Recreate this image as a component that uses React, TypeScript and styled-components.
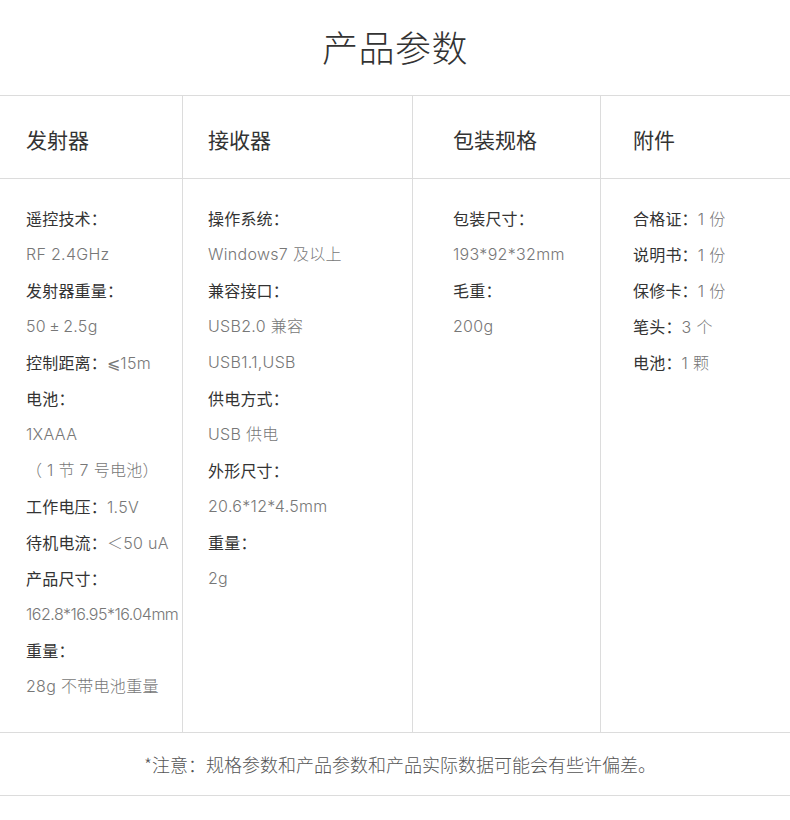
import React from "react";
import { createGlobalStyle, styled } from "styled-components";

const GlobalStyle = createGlobalStyle`
    html, body {
        margin: 0;
        padding: 0;
        background: #fff;
    }

    body {
        font-family: "Noto Sans CJK SC", "Noto Sans", sans-serif;
        color: #333;
    }
`;

const Page = styled.div`
    width: 790px;
`;

const Title = styled.h1`
    margin: 0;
    height: 95px;
    padding-bottom: 4px;
    box-sizing: border-box;
    display: flex;
    align-items: center;
    justify-content: center;
    font-size: 36px;
    font-weight: 300;
    color: #333;
    letter-spacing: 0.5px;
`;

const Grid = styled.div`
    display: grid;
    grid-template-columns: 183px 230px 188px 189px;
    border-top: 1px solid #dcdcdc;
`;

const Cell = styled.div<{ $pad: number; $last?: boolean }>`
    padding-left: ${(p) => p.$pad}px;
    border-right: ${(p) => (p.$last ? "none" : "1px solid #dcdcdc")};
    border-bottom: 1px solid #dcdcdc;
`;

const HeadCell = styled(Cell)`
    height: 83px;
    display: flex;
    align-items: center;
    padding-top: 3px;
    box-sizing: border-box;
    font-size: 21px;
    color: #333;
`;

const BodyCell = styled(Cell)`
    height: 554px;
    box-sizing: border-box;
    padding-top: 21px;
    display: flex;
    flex-direction: column;
`;

const Line = styled.div<{ $tight?: boolean }>`
    height: 36px;
    line-height: 36px;
    font-size: 16px;
    white-space: nowrap;
    color: #777;
    font-family: "Inter", "Noto Sans CJK SC", sans-serif;
    font-weight: 300;
    letter-spacing: ${(p) => (p.$tight ? "-0.5px" : "0.3px")};
`;

const Label = styled.span`
    color: #333;
    font-family: "Noto Sans CJK SC", sans-serif;
    font-weight: 400;
    letter-spacing: 0.2px;
`;

const Note = styled.div`
    height: 62px;
    padding-left: 10px;
    border-bottom: 1px solid #dcdcdc;
    display: flex;
    align-items: center;
    justify-content: center;
    font-size: 18px;
    font-weight: 300;
    color: #555;
`;

type Item = { label?: string; value?: string; tight?: boolean };

const columns: { title: string; pad: number; items: Item[] }[] = [
    {
        title: "发射器",
        pad: 26,
        items: [
            { label: "遥控技术：" },
            { value: "RF 2.4GHz" },
            { label: "发射器重量：" },
            { value: "50\u2009±\u20092.5g" },
            { label: "控制距离：", value: "⩽15m" },
            { label: "电池：" },
            { value: "1XAAA" },
            { value: "（ 1 节 7 号电池）" },
            { label: "工作电压：", value: "1.5V" },
            { label: "待机电流：", value: "＜50 uA" },
            { label: "产品尺寸：" },
            { value: "162.8*16.95*16.04mm", tight: true },
            { label: "重量：" },
            { value: "28g 不带电池重量" },
        ],
    },
    {
        title: "接收器",
        pad: 25,
        items: [
            { label: "操作系统：" },
            { value: "Windows7 及以上" },
            { label: "兼容接口：" },
            { value: "USB2.0 兼容" },
            { value: "USB1.1,USB" },
            { label: "供电方式：" },
            { value: "USB 供电" },
            { label: "外形尺寸：" },
            { value: "20.6*12*4.5mm" },
            { label: "重量：" },
            { value: "2g" },
        ],
    },
    {
        title: "包装规格",
        pad: 40,
        items: [
            { label: "包装尺寸：" },
            { value: "193*92*32mm" },
            { label: "毛重：" },
            { value: "200g" },
        ],
    },
    {
        title: "附件",
        pad: 32,
        items: [
            { label: "合格证：", value: "1 份" },
            { label: "说明书：", value: "1 份" },
            { label: "保修卡：", value: "1 份" },
            { label: "笔头：", value: "3 个" },
            { label: "电池：", value: "1 颗" },
        ],
    },
];

export default function App() {
    return (
        <Page>
            <GlobalStyle />
            <Title>产品参数</Title>
            <Grid>
                {columns.map((col, i) => (
                    <HeadCell key={col.title} $pad={col.pad} $last={i === columns.length - 1}>
                        {col.title}
                    </HeadCell>
                ))}
                {columns.map((col, i) => (
                    <BodyCell key={col.title} $pad={col.pad} $last={i === columns.length - 1}>
                        {col.items.map((item, j) => (
                            <Line key={j} $tight={item.tight}>
                                {item.label && <Label>{item.label}</Label>}
                                {item.value}
                            </Line>
                        ))}
                    </BodyCell>
                ))}
            </Grid>
            <Note>*注意：规格参数和产品参数和产品实际数据可能会有些许偏差。</Note>
        </Page>
    );
}
